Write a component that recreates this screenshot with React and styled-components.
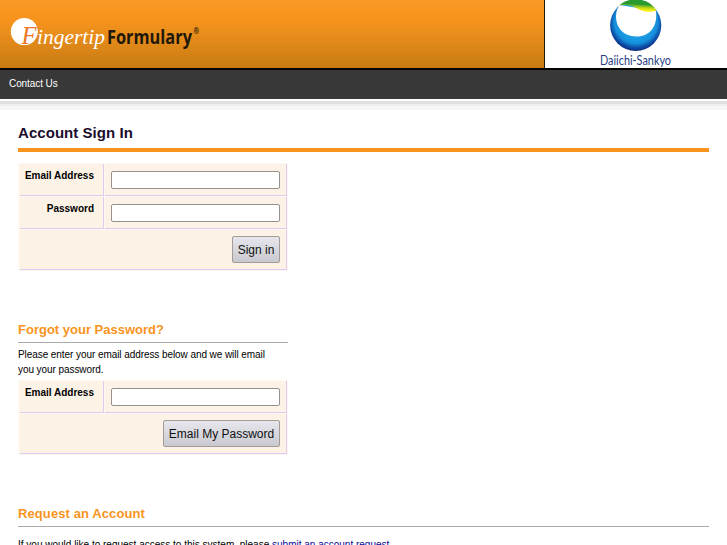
import styled, { createGlobalStyle } from 'styled-components'

const GlobalStyle = createGlobalStyle`
  body {
    margin: 0;
    background: #fff;
    color: #000;
    font-family: "Liberation Sans", Arial, sans-serif;
    font-size: 10px;
    overflow: hidden;
  }

  * {
    box-sizing: border-box;
  }
`

const Header = styled.header`
  display: flex;
  justify-content: space-between;
  height: 70px;
  border-bottom: 2px solid #050400;
  background: linear-gradient(#f99a28 0, #f8941d 18px, #e58b1b 38px, #cd7e13 62px, #c97b12 68px);
`

const Partner = styled.div`
  width: 183px;
  border-left: 1px solid #20180c;
  background: #fff;
`

const Nav = styled.nav`
  height: 29px;
  padding-left: 9px;
  background: #383838;
  color: #fff;
  line-height: 28px;
  letter-spacing: -0.08px;
`

const NavShadow = styled.div`
  height: 11px;
  background: linear-gradient(#fff 0 2px, #e1dfdf 2px 5px, #efeff0 5px 7px, #f7f7f9 7px 11px);
`

const Content = styled.main`
  padding: 0 18px;
`

const PageTitle = styled.h1`
  height: 42px;
  margin: 0 0 11px;
  padding-top: 14px;
  border-bottom: 4px solid #f8941d;
  color: #1c0c2c;
  font-size: 15px;
  line-height: 18px;
  letter-spacing: 0.05px;
`

const Section = styled.section`
  width: ${props => props.width || '100%'};
  padding-top: ${props => props.top};
`

const SectionTitle = styled.h2`
  height: 22px;
  margin: 0;
  border-bottom: 1px solid #aaa;
  color: #f8941d;
  font-size: 13px;
  line-height: 17px;
  letter-spacing: ${props => props.spacing};
`

const Text = styled.p`
  margin: 0;
  padding-top: ${props => props.top || '4px'};
  line-height: 14.5px;
  letter-spacing: ${props => props.spacing || '0'};
  white-space: nowrap;
`

const Link = styled.a`
  color: #0a0a96;
`

const Form = styled.form`
  display: grid;
  grid-template-columns: 84px 182px;
  grid-template-rows: ${props => props.rows};
  gap: 1px;
  width: 270px;
  margin-top: ${props => props.top || '0'};
  padding: 1px 1px 1px 2px;
  background: #fff8f0;
`

const Cell = styled.div`
  border-right: 1px solid #dccaf0;
  border-bottom: 1px solid #dccaf0;
  background: #fdf2e6;
`

const LabelCell = styled(Cell)`
  padding: 6px 9px 0 0;
  font-weight: bold;
  line-height: 12px;
  text-align: right;
`

const FieldCell = styled(Cell)`
  padding: 7px 0 0 6px;
`

const ButtonCell = styled(Cell)`
  display: flex;
  grid-column: 1 / 3;
  align-items: flex-start;
  justify-content: flex-end;
  padding: 6px 6px 0 0;
`

const Input = styled.input`
  display: block;
  width: 169px;
  height: 18px;
  margin: 0;
  padding: 1px 3px;
  border: 1px solid #96918c;
  border-radius: 2px;
  background: #fff;
  outline: none;
`

const Button = styled.button`
  width: ${props => props.width};
  height: 27px;
  margin: 0;
  padding: 0;
  border: 1px solid #a49b98;
  border-radius: 2px;
  background: linear-gradient(#e6e6ec, #c9c9d0);
  color: #111;
  font-family: inherit;
  font-size: 12px;
  white-space: nowrap;
`

const FormularyLogo = () => (
  <svg width="210" height="68" viewBox="0 0 210 68">
    <circle cx="24.3" cy="31.6" r="13.5" fill="#fff" />
    <text x="21.5" y="44" fill="#ee7624" fontFamily="Liberation Serif, serif" fontStyle="italic" fontSize="25" textLength="15" lengthAdjust="spacingAndGlyphs">F</text>
    <text x="37" y="44" fill="#fff" fontFamily="Liberation Serif, serif" fontStyle="italic" fontSize="22" textLength="68" lengthAdjust="spacingAndGlyphs">ingertip</text>
    <text x="107" y="44" fill="#20180a" fontFamily="Open Sans, sans-serif" fontWeight="700" fontSize="20" textLength="85" lengthAdjust="spacingAndGlyphs">Formulary</text>
    <text x="193.5" y="34" fill="#20180a" fontFamily="Open Sans, sans-serif" fontWeight="700" fontSize="8" textLength="5.5" lengthAdjust="spacingAndGlyphs">®</text>
  </svg>
)

const SankyoLogo = () => (
  <svg width="182" height="68" viewBox="545 0 182 68">
    <defs>
      <radialGradient id="ring" gradientUnits="userSpaceOnUse" cx="636" cy="22" r="29">
        <stop offset="0.5" stopColor="#1ba1e6" />
        <stop offset="0.74" stopColor="#168fdc" />
        <stop offset="0.88" stopColor="#0c4fa8" />
        <stop offset="1" stopColor="#0d2a80" />
      </radialGradient>
      <linearGradient id="leaf" x1="0.7" y1="0" x2="0.55" y2="1">
        <stop offset="0.4" stopColor="#289a30" />
        <stop offset="0.65" stopColor="#b5d21a" />
        <stop offset="0.85" stopColor="#f8ee10" />
      </linearGradient>
    </defs>
    <circle cx="635.7" cy="25.3" r="25.6" fill="url(#ring)" />
    <path d="M620 5 L656 11 C658 26 650 36.5 636.5 36.5 C622 36.5 614 25 616.5 12 C617 9 618 7 620 5Z" fill="#fff" />
    <path d="M619 5.5 C625 0 632 -0.8 638 -0.5 C647 0 653 5 656.5 10.5 C649 13 642 11.5 637 8.5 C631 5 627 4.5 619 5.5Z" fill="url(#leaf)" />
    <text x="600" y="65" fill="#294184" fontFamily="Lato, sans-serif" fontSize="12.5" textLength="71" lengthAdjust="spacingAndGlyphs">Daiichi-Sankyo</text>
  </svg>
)

const App = () => {
  return (
    <>
      <GlobalStyle />
      <Header>
        <FormularyLogo />
        <Partner>
          <SankyoLogo />
        </Partner>
      </Header>
      <Nav>Contact Us</Nav>
      <NavShadow />
      <Content>
        <PageTitle>Account Sign In</PageTitle>
        <Form rows="32px 32px 40px">
          <LabelCell>Email Address</LabelCell>
          <FieldCell><Input type="text" /></FieldCell>
          <LabelCell>Password</LabelCell>
          <FieldCell><Input type="password" /></FieldCell>
          <ButtonCell>
            <Button type="button" width="48px">Sign in</Button>
          </ButtonCell>
        </Form>
        <Section width="270px" top="50px">
          <SectionTitle spacing="0">Forgot your Password?</SectionTitle>
          <Text top="5px" spacing="-0.07px">
            Please enter your email address below and we will email<br />
            you your password.
          </Text>
          <Form rows="32px 40px" top="3px">
            <LabelCell>Email Address</LabelCell>
            <FieldCell><Input type="text" /></FieldCell>
            <ButtonCell>
              <Button type="button" width="117px">Email My Password</Button>
            </ButtonCell>
          </Form>
        </Section>
        <Section top="50px">
          <SectionTitle spacing="0.1px">Request an Account</SectionTitle>
          <Text top="11px">
            If you would like to request access to this system, please <Link href="#">submit an account request</Link>.
          </Text>
        </Section>
      </Content>
    </>
  )
}

export default App
